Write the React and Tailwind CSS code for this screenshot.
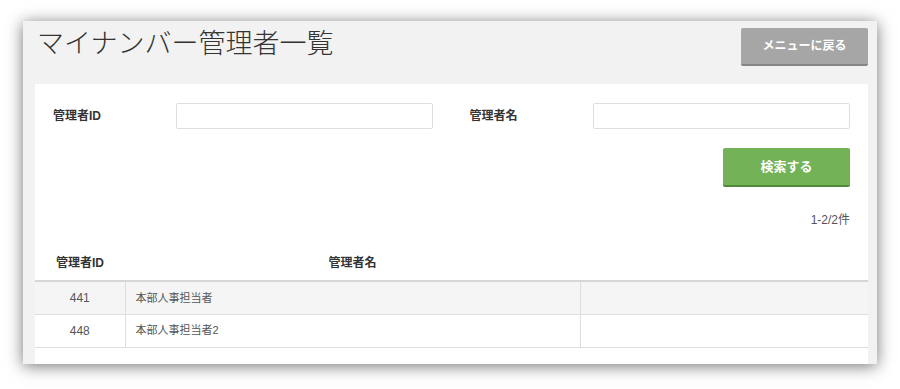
import React from "react";

const jp = { fontFamily: '"Liberation Sans", "Noto Sans CJK JP", sans-serif' };

const rows = [
  { id: "441", name: "本部人事担当者" },
  { id: "448", name: "本部人事担当者2" },
];

const Field = ({ label }) => (
  <div className="flex w-1/2 items-center pl-[18px]">
    <div className="w-[123px] text-[12px] font-bold text-[#333]">{label}</div>
    <input className="h-[26px] w-[257px] rounded-[2px] border border-[#dedede] bg-white px-2 text-[12px] outline-none" />
  </div>
);

const App = () => {
  return (
    <div className="h-[389px] w-[900px] overflow-hidden bg-white pl-[23px] pt-[21px]" style={jp}>
      <div className="flex h-[343px] w-[854px] flex-col bg-[#f2f2f2] pl-[12px] pr-[9px] shadow-[0_2px_15px_rgba(0,0,0,0.55)]">
        {/* header */}
        <div className="flex h-[63px] shrink-0 items-start justify-between pt-[7px]">
          <h1 className="pl-[2px] text-[27px] font-light leading-[32px] text-[#333]">マイナンバー管理者一覧</h1>
          <button className="h-[38px] w-[127px] rounded-[2px] border-b-2 border-[#858585] bg-[#a6a6a6] text-[12px] font-bold text-white">
            メニューに戻る
          </button>
        </div>

        {/* panel */}
        <div className="flex-1 bg-white pt-[19px]">
          <div className="flex">
            <Field label="管理者ID" />
            <Field label="管理者名" />
          </div>
          <div className="flex justify-end pr-[18px] pt-[19px]">
            <button className="h-[39px] w-[127px] rounded-[2px] border-b-2 border-[#4f8a3c] bg-[#73b257] text-[13px] font-bold text-white">
              検索する
            </button>
          </div>
          <div className="mt-[25px] pr-[18px] text-right text-[12px] leading-[16px] text-[#555]">1-2/2件</div>

          <table className="mt-[17px] w-full border-collapse text-[11px] text-[#555]">
            <thead>
              <tr className="h-[36px] border-b-2 border-[#d6d6d6]">
                <th className="w-[90px] text-center text-[12px] font-bold text-[#333]">管理者ID</th>
                <th className="w-[455px] text-center text-[12px] font-bold text-[#333]">管理者名</th>
                <th></th>
              </tr>
            </thead>
            <tbody>
              {rows.map((r, i) => (
                <tr key={r.id} className={`h-[33px] border-b border-[#dedede] ${i % 2 === 0 ? "bg-[#f5f5f5]" : "bg-white"}`}>
                  <td className="border-r border-[#dedede] text-center text-[12px]">{r.id}</td>
                  <td className="border-r border-[#dedede] pl-[10px]">{r.name}</td>
                  <td></td>
                </tr>
              ))}
            </tbody>
          </table>
        </div>
      </div>
    </div>
  );
};

export default App;
